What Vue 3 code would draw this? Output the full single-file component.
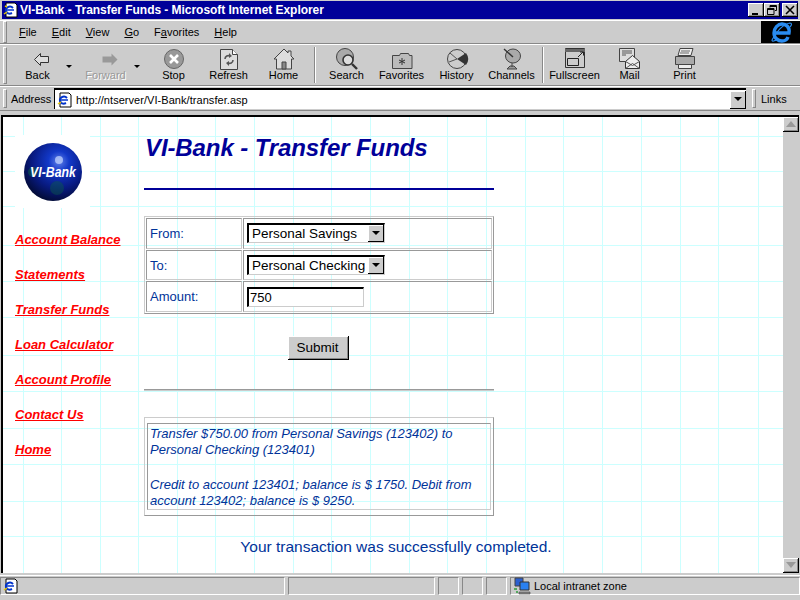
<template>
  <div class="window">
    <div class="titlebar">
      <svg class="title-icon" width="16" height="16" viewBox="0 0 16 16">
        <path d="M3 1h9l2 2v12H3z" fill="#fff" stroke="#000" />
        <path d="M10 6a4 3.4 0 1 0 -1 5" fill="none" stroke="#0033cc" stroke-width="2" />
        <path d="M4 8h7" stroke="#0033cc" stroke-width="1.5" />
        <path d="M1 12l3-2M4 5L2 4" stroke="#e8c800" stroke-width="1.5" />
      </svg>
      <span class="title-text">VI-Bank - Transfer Funds - Microsoft Internet Explorer</span>
      <div class="win-btns">
        <span class="win-btn">
          <svg width="10" height="10" viewBox="0 0 10 10"><path d="M1 8h6v2H1z" fill="#000" /></svg>
        </span>
        <span class="win-btn">
          <svg width="10" height="10" viewBox="0 0 10 10" fill="none" stroke="#000"><path d="M3 2.5V.5h6.5v5H8" /><path d="M3 1.5h6.5" /><path d="M.5 3.5h6.5v6H.5z" /><path d="M.5 4.5h6.5" /></svg>
        </span>
        <span class="win-btn close">
          <svg width="10" height="10" viewBox="0 0 10 10" stroke="#000" stroke-width="1.6"><path d="M1 1l8 8M9 1l-8 8" /></svg>
        </span>
      </div>
    </div>

    <div class="menubar">
      <i class="grip"></i>
      <nav class="menu">
        <span><u>F</u>ile</span>
        <span><u>E</u>dit</span>
        <span><u>V</u>iew</span>
        <span><u>G</u>o</span>
        <span>F<u>a</u>vorites</span>
        <span><u>H</u>elp</span>
      </nav>
      <div class="ie-logo">
        <svg width="24" height="22" viewBox="0 0 24 22" fill="none">
          <path d="M6 12h14c1-6-3-9-7-9s-8 4-8 9 4 8 8 8c3 0 5-1 6-4" stroke="#2a8cf0" stroke-width="3.4" />
          <path d="M3 19C7 11 14 3 21 2c2 0 2 2 0 4M3 19c0 2 3 1 5-1" stroke="#2a8cf0" stroke-width="1.2" />
        </svg>
      </div>
    </div>

    <div class="toolbar">
      <i class="grip tall"></i>
      <template v-for="b in buttons" :key="b.label">
        <i v-if="b.sep" class="tool-sep"></i>
        <div class="tool" :class="{ 'has-arrow': b.arrow, disabled: b.disabled }">
          <svg width="30" height="24" viewBox="0 0 30 24" v-html="b.icon"></svg>
          <span>{{ b.label }}</span>
          <b v-if="b.arrow" class="caret"></b>
        </div>
      </template>
    </div>

    <div class="addressbar">
      <i class="grip short"></i>
      <span class="addr-label">Address</span>
      <div class="addr-field">
        <svg width="16" height="16" viewBox="0 0 16 16">
          <path d="M3 1h9l2 2v12H3z" fill="#fff" stroke="#000" />
          <path d="M10 6a4 3.4 0 1 0 -1 5" fill="none" stroke="#0033cc" stroke-width="2" />
          <path d="M4 8h7" stroke="#0033cc" stroke-width="1.5" />
          <path d="M1 12l3-2" stroke="#e8c800" stroke-width="1.5" />
        </svg>
        <span class="addr-text">http://ntserver/VI-Bank/transfer.asp</span>
        <span class="addr-drop"><b class="caret black"></b></span>
      </div>
      <i class="grip short links-grip"></i>
      <span class="links">Links</span>
    </div>

    <div class="viewport">
      <div class="page">
        <svg class="grid" width="780" height="456">
          <path v-for="x in gridX" :key="'x' + x" :d="`M${x - 1.5} 0V456`" stroke="#ccffff" />
          <path v-for="y in gridY" :key="'y' + y" :d="`M0 ${y - 116.5}H780`" stroke="#ccffff" />
        </svg>

        <div class="columns">
          <aside class="sidebar">
            <div class="logo">
              <svg width="60" height="60" viewBox="0 0 60 60">
                <defs>
                  <radialGradient id="ball" cx="0.6" cy="0.32" r="0.72">
                    <stop offset="0" stop-color="#5f80e8" />
                    <stop offset="0.25" stop-color="#1238c8" />
                    <stop offset="0.65" stop-color="#081a80" />
                    <stop offset="1" stop-color="#020a30" />
                  </radialGradient>
                </defs>
                <circle cx="30" cy="30" r="29" fill="url(#ball)" />
                <circle cx="10" cy="30" r="5" fill="#0c5a4a" opacity="0.6" />
                <circle cx="34" cy="46" r="7" fill="#0c5a4a" opacity="0.45" />
                <circle cx="36" cy="18" r="4" fill="#c8d8ff" opacity="0.7" />
                <text transform="translate(30 35) scale(0.82 1)" text-anchor="middle" class="logo-text">VI-Bank</text>
              </svg>
            </div>
            <a v-for="l in links" :key="l" class="side-link" href="#">{{ l }}</a>
          </aside>

          <main class="main">
            <h1>VI-Bank - Transfer Funds</h1>
            <hr class="rule-blue" />
            <table class="form-table">
              <tbody>
                <tr class="row-a">
                  <td class="lbl">From:</td>
                  <td><div class="fake-select"><span>Personal Savings</span><em><b class="caret black"></b></em></div></td>
                </tr>
                <tr class="row-b">
                  <td class="lbl">To:</td>
                  <td><div class="fake-select"><span>Personal Checking</span><em><b class="caret black"></b></em></div></td>
                </tr>
                <tr class="row-a">
                  <td class="lbl">Amount:</td>
                  <td><input class="amount" type="text" value="750" /></td>
                </tr>
              </tbody>
            </table>
            <div class="submit-row"><button class="submit" type="button">Submit</button></div>
            <hr class="rule-grey" />
            <div class="result">
              <div class="result-inner">
                <p>Transfer $750.00 from Personal Savings (123402) to Personal Checking (123401)</p>
                <p>Credit to account 123401; balance is $ 1750. Debit from account 123402; balance is $ 9250.</p>
              </div>
            </div>
          </main>
        </div>

        <p class="done">Your transaction was successfully completed.</p>
      </div>

      <div class="scrollbar">
        <span class="sb-btn"><svg width="10" height="6" viewBox="0 0 10 6"><path d="M5 0l5 6H0z" fill="#999" /></svg></span>
        <span class="sb-btn"><svg width="10" height="6" viewBox="0 0 10 6"><path d="M0 0h10L5 6z" fill="#999" /></svg></span>
      </div>
    </div>

    <div class="statusbar">
      <div class="cell first">
        <svg width="16" height="16" viewBox="0 0 16 16">
          <path d="M3 1h9l2 2v12H3z" fill="#fff" stroke="#000" />
          <path d="M10 6a4 3.4 0 1 0 -1 5" fill="none" stroke="#0033cc" stroke-width="2" />
          <path d="M4 8h7" stroke="#0033cc" stroke-width="1.5" />
          <path d="M1 12l3-2" stroke="#e8c800" stroke-width="1.5" />
        </svg>
      </div>
      <div class="cell second"></div>
      <div class="cell tiny"></div>
      <div class="cell tiny"></div>
      <div class="cell tiny"></div>
      <div class="cell zone">
        <svg width="18" height="18" viewBox="0 0 18 18">
          <path d="M2 1h8v8H2z" fill="#2a5fd0" stroke="#444" />
          <path d="M7 5h9v8H7z" fill="#2a80f0" stroke="#333" />
          <path d="M6 15h11v2H6z" fill="#888" stroke="#444" stroke-width="0.6" />
          <path d="M1 12h3M3 15h2" stroke="#2c9a3a" stroke-width="1.5" />
        </svg>
        <span>Local intranet zone</span>
      </div>
    </div>
  </div>
</template>

<script setup>
const grey = 'fill="#999" stroke="#666"'

const buttons = [
  { label: 'Back', arrow: true, icon: '<path d="M11.500 12.500l6-6v3h8v6h-8v3z" fill="#ddd" stroke="#333"/>' },
  { label: 'Forward', arrow: true, disabled: true, icon: '<path d="M26.500 12.500l-6-6v3h-9v6h9v3z" fill="#999"/>' },
  { label: 'Stop', icon: `<circle cx="15" cy="12" r="9.5" ${grey}/><path d="M11 8l8 8M19 8l-8 8" stroke="#fff" stroke-width="2.6"/>` },
  { label: 'Refresh', icon: '<path d="M6.5 2.5h12l5 5v15h-17z" fill="#ddd" stroke="#444"/><path d="M18.5 2.5v5h5" fill="#fff" stroke="#444"/><path d="M11 12c0-3 3-4 5-3M19 13c0 3-3 4-5 3" fill="none" stroke="#555" stroke-width="1.6"/><path d="M15 6l3 3-3 2zM15 19l-3-3 3-2z" fill="#555"/>' },
  { label: 'Home', icon: '<path d="M15 2L5 12h2.5v10h15V12H25l-3-3V4h-3v2z" fill="#ddd" stroke="#444"/><path d="M13 22v-7h4v7z" fill="#888" stroke="#444"/>' },
  { label: 'Search', sep: true, icon: '<circle cx="13" cy="10" r="8.5" fill="#aaa" stroke="#444"/><circle cx="16" cy="13" r="5" fill="#ddd" stroke="#333" stroke-width="1.6"/><path d="M20 17l5 5" stroke="#333" stroke-width="2.4"/>' },
  { label: 'Favorites', icon: '<path d="M5.5 8.500h7l1-2h8l1 2h2.500v13h-19.500z" fill="#bbb" stroke="#444"/><path d="M15 11v7M12 13l6 3M18 13l-6 3" stroke="#333"/>' },
  { label: 'History', icon: '<circle cx="15" cy="12" r="9.500" fill="#ccc" stroke="#444"/><path d="M15 12L24 6a10 10 0 0 1 0 12z" fill="#333"/><path d="M15 12L8 6M15 12L7 15" stroke="#555"/>' },
  { label: 'Channels', icon: '<ellipse cx="16" cy="9" rx="7.500" ry="7" fill="#aaa" stroke="#444"/><path d="M7 2l9 8" stroke="#333" stroke-width="1.4"/><path d="M15 16v4M10 22h10l-3-3h-4z" fill="#999" stroke="#444"/>' },
  { label: 'Fullscreen', sep: true, icon: '<path d="M5.500 1.500h19v19h-19z" fill="#ccc" stroke="#333"/><path d="M5 2h20v3H5z" fill="#666"/><path d="M7.500 11.500h11v7h-11z" fill="#ccc" stroke="#222"/><path d="M18 10l5-5M20 5h3.500v3.500" fill="none" stroke="#222"/>' },
  { label: 'Mail', icon: '<path d="M4.500 1.500h15v13h-15z" fill="#ddd" stroke="#444"/><path d="M7 4h10M7 6h10M7 8h4" stroke="#555"/><path d="M10.500 14.500l7-6 7 6v7h-14z" fill="#eee" stroke="#333"/><path d="M10.500 21.500l7-5 7 5M10.500 14.500l7 4 7-4" fill="none" stroke="#555"/>' },
  { label: 'Print', icon: '<path d="M10 1.500h13l-2 7H8z" fill="#eee" stroke="#444"/><path d="M11 4h9M10 6h9" stroke="#666"/><path d="M5.500 9.500h19v8h-19z" fill="#aaa" stroke="#444"/><path d="M8.500 17.500h13v4h-13z" fill="#eee" stroke="#444"/>' }
]

const links = [
  'Account Balance',
  'Statements',
  'Transfer Funds',
  'Loan Calculator',
  'Account Profile',
  'Contact Us',
  'Home'
]

// the wallpaper tile is a hand-ruled grid, slightly uneven
const gridX = [22, 60, 99, 137, 176, 214, 253, 292, 330, 369, 408, 446, 485, 524, 562, 601, 640, 679, 717, 757]
const gridY = [136, 171, 206, 245, 281, 317, 355, 391, 428, 464, 501, 536]
</script>

<style>
html, body {
  margin: 0;
  background: #cccccc;
}
</style>

<style scoped>
.window {
  width: 800px;
  height: 600px;
  display: flex;
  flex-direction: column;
  background: #cccccc;
  font-family: "Liberation Sans", Arial, sans-serif;
  font-size: 11px;
  color: #000;
  overflow: hidden;
}

.titlebar {
  height: 18px;
  margin: 1px 2px 0 2px;
  background: #000099;
  display: flex;
  align-items: center;
  flex: none;
}

.title-icon {
  margin-left: 1px;
  flex: none;
}

.title-text {
  margin-left: 1px;
  color: #fff;
  font-weight: bold;
  font-size: 12px;
  letter-spacing: -0.04px;
  white-space: nowrap;
}

.win-btns {
  margin-left: auto;
  display: flex;
}

.win-btn {
  width: 16px;
  height: 14px;
  background: #cccccc;
  border-right: 1px solid #000;
  border-bottom: 1px solid #000;
  box-shadow: inset 1px 1px 0 #fff, inset -1px -1px 0 #888;
  display: flex;
  align-items: center;
  justify-content: center;
  box-sizing: border-box;
}

.win-btn.close {
  margin-left: 2px;
}

.grip {
  width: 2px;
  height: 20px;
  border: 1px solid;
  border-color: #fff #888 #888 #fff;
  margin-left: 3px;
  flex: none;
}

.grip.tall {
  height: 35px;
}

.grip.short {
  height: 17px;
}

.menubar {
  height: 24px;
  box-sizing: border-box;
  margin-top: 1px;
  border-top: 1px solid #fff;
  border-bottom: 1px solid #888;
  display: flex;
  align-items: center;
  flex: none;
}

.menu {
  display: flex;
  margin-left: 12px;
  gap: 15px;
}

.ie-logo {
  margin-left: auto;
  width: 39px;
  height: 22px;
  background: #000;
  display: flex;
  align-items: center;
  justify-content: center;
}

.toolbar {
  height: 42px;
  box-sizing: border-box;
  border-top: 1px solid #fff;
  border-bottom: 1px solid #888;
  display: flex;
  align-items: center;
  flex: none;
}

.tool {
  width: 55px;
  height: 40px;
  position: relative;
  display: flex;
  flex-direction: column;
  align-items: center;
  flex: none;
}

.toolbar > .grip + .tool {
  margin-left: 3px;
}

.tool svg {
  margin-top: 2px;
}

.tool span {
  margin-top: -3px;
  line-height: 14px;
}

.tool.disabled span {
  color: #999;
  text-shadow: 1px 1px 0 #fff;
}

.tool.has-arrow {
  margin-right: 12px;
}

.tool.has-arrow + .tool {
  margin-left: 1px;
}

.caret {
  width: 0;
  height: 0;
  border-left: 3px solid transparent;
  border-right: 3px solid transparent;
  border-top: 3px solid #000;
  display: block;
}

.tool .caret {
  position: absolute;
  right: -7px;
  top: 20px;
}

.tool-sep {
  width: 1px;
  height: 36px;
  margin: 0 3px;
  background: #888;
  border-right: 1px solid #fff;
  flex: none;
}

.addressbar {
  height: 25px;
  box-sizing: border-box;
  border-top: 1px solid #fff;
  border-bottom: 1px solid #888;
  display: flex;
  align-items: center;
  flex: none;
}

.addr-label {
  margin-left: 4px;
  width: 43px;
  flex: none;
}

.addr-field {
  width: 692px;
  height: 21px;
  box-sizing: border-box;
  background: #fff;
  border-top: 2px solid #000;
  border-left: 1px solid #000;
  display: flex;
  align-items: center;
  padding-left: 2px;
  flex: none;
}

.addr-text {
  margin-left: 3px;
  letter-spacing: 0.05px;
}

.addr-drop {
  margin-left: auto;
  width: 16px;
  height: 18px;
  box-sizing: border-box;
  background: #cccccc;
  border-right: 1px solid #000;
  border-bottom: 1px solid #000;
  box-shadow: inset 1px 1px 0 #fff;
  display: flex;
  align-items: center;
  justify-content: center;
}

.caret.black {
  border-left-width: 4px;
  border-right-width: 4px;
  border-top-width: 4px;
}

.links-grip {
  margin-left: 6px;
}

.links {
  margin-left: 5px;
}

.viewport {
  height: 458px;
  margin: 4px 1px 0;
  display: flex;
  flex: none;
  background: #fff;
  border-top: 2px solid #000;
  border-left: 2px solid #000;
  box-sizing: border-box;
}

.page {
  width: 780px;
  position: relative;
  overflow: hidden;
}

.grid {
  position: absolute;
  left: 0;
  top: 0;
}

.columns {
  position: relative;
  display: flex;
}

.sidebar {
  width: 141px;
  padding-left: 12px;
  box-sizing: border-box;
  flex: none;
  padding-top: 18px;
}

.logo {
  width: 75px;
  height: 73px;
  margin-bottom: 24px;
  background: #fff;
  display: flex;
  align-items: center;
  justify-content: center;
}

.logo-text {
  font-family: "Liberation Sans", Arial, sans-serif;
  font-weight: bold;
  font-style: italic;
  font-size: 15px;
  fill: #fff;
}

.side-link {
  display: block;
  height: 16px;
  line-height: 16px;
  margin-bottom: 19px;
  color: #ff0000;
  font-weight: bold;
  font-style: italic;
  font-size: 13px;
  text-decoration: underline;
  white-space: nowrap;
}

.main {
  width: 350px;
  padding-top: 17px;
  flex: none;
}

h1 {
  margin: 0;
  padding-left: 1px;
  height: 28px;
  line-height: 28px;
  font-size: 24px;
  letter-spacing: -0.1px;
  font-weight: bold;
  font-style: italic;
  color: #000099;
}

hr {
  border: 0;
  margin: 0;
  height: 2px;
}

.rule-blue {
  margin-top: 26px;
  background: #000099;
}

.rule-grey {
  margin-top: 29px;
  background: linear-gradient(#999 50%, #ccc 50%);
}

.form-table {
  margin-top: 26px;
  width: 350px;
  height: 98px;
  box-sizing: border-box;
  border-collapse: separate;
  border-spacing: 1px;
  border: 1px solid;
  border-color: #ccc #999 #999 #ccc;
  table-layout: fixed;
}

.form-table td {
  padding: 0 0 0 3px;
  border: 1px solid;
  border-color: #999 #ccc #ccc #999;
  font-size: 13px;
}

.form-table td:first-child {
  width: 91px;
}

.row-a td {
  height: 29px;
}

.row-b td {
  height: 28px;
}

.lbl {
  color: #003399;
}

.fake-select {
  width: 138px;
  height: 20px;
  margin-top: -1px;
  box-sizing: border-box;
  border-top: 2px solid #000;
  border-left: 2px solid #000;
  border-right: 1px solid #ccc;
  border-bottom: 1px solid #ccc;
  background: #fff;
  display: flex;
  align-items: center;
  font-size: 13.5px;
  padding-left: 3px;
  white-space: nowrap;
}

.fake-select span {
  flex: 1;
  min-width: 0;
}

.fake-select em {
  width: 16px;
  height: 17px;
  box-sizing: border-box;
  background: #cccccc;
  border-right: 1px solid #000;
  border-bottom: 1px solid #000;
  box-shadow: inset 1px 1px 0 #fff;
  display: flex;
  align-items: center;
  justify-content: center;
  flex: none;
}

.amount {
  display: block;
  width: 117px;
  height: 20px;
  box-sizing: border-box;
  padding: 0 0 0 1px;
  border-style: solid;
  border-width: 2px 1px 1px 2px;
  border-color: #000 #ccc #ccc #000;
  background: #fff;
  font-family: inherit;
  font-size: 13px;
  outline: none;
}

.submit-row {
  margin-top: 22px;
  padding-right: 2px;
  display: flex;
  justify-content: center;
}

.submit {
  width: 61px;
  height: 24px;
  padding: 0;
  background: #cccccc;
  border: 0;
  border-right: 1px solid #000;
  border-bottom: 1px solid #000;
  box-shadow: inset 1px 1px 0 #fff, inset -1px -1px 0 #888;
  font-family: inherit;
  font-size: 13.5px;
  color: #000;
}

.result {
  margin-top: 26px;
  height: 99px;
  box-sizing: border-box;
  padding: 5px 2px;
  border: 1px solid;
  border-color: #ccc #999 #999 #ccc;
}

.result-inner {
  height: 87px;
  box-sizing: border-box;
  padding: 2px 2px 0;
  border: 1px solid;
  border-color: #999 #ccc #ccc #999;
  color: #003399;
  font-style: italic;
  font-size: 13px;
  line-height: 16px;
}

.result-inner p {
  margin: 0 0 19px;
}

.done {
  position: relative;
  margin: 22px 0 0;
  padding-left: 6px;
  text-align: center;
  font-size: 15.5px;
  line-height: 18px;
  color: #003399;
}

.scrollbar {
  width: 16px;
  background: #cccccc;
  display: flex;
  flex-direction: column;
  justify-content: space-between;
  flex: none;
}

.sb-btn {
  height: 15px;
  box-sizing: border-box;
  background: #cccccc;
  border-right: 1px solid #000;
  border-bottom: 1px solid #000;
  box-shadow: inset 1px 1px 0 #fff, inset -1px -1px 0 #888;
  display: flex;
  align-items: center;
  justify-content: center;
}

.statusbar {
  height: 21px;
  box-sizing: border-box;
  margin-top: 2px;
  padding-top: 1px;
  display: flex;
  gap: 3px;
  flex: none;
  border-top: 1px solid #fff;
}

.cell {
  height: 18px;
  box-sizing: border-box;
  border: 1px solid;
  border-color: #888 #fff #fff #888;
  display: flex;
  align-items: center;
  flex: none;
}

.cell.first {
  width: 285px;
  padding-left: 2px;
}

.cell.second {
  width: 147px;
}

.cell.tiny {
  width: 21px;
}

.cell.zone {
  flex: 1;
  padding-left: 2px;
  gap: 3px;
}
</style>
